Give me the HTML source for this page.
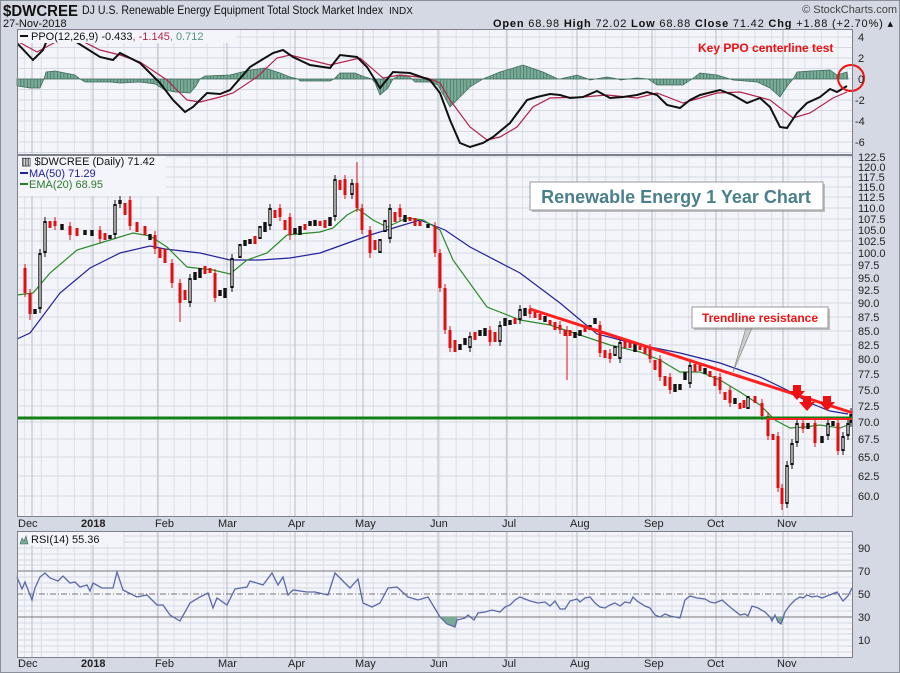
<!DOCTYPE html>
<html><head><meta charset="utf-8"><style>
body{margin:0;background:#d5d9e3;font-family:"Liberation Sans",sans-serif;}
svg text{font-family:"Liberation Sans",sans-serif;}
</style></head><body>
<svg width="900" height="673" xmlns="http://www.w3.org/2000/svg" style="display:block">
<defs>
<pattern id="vg" x="0" y="0" width="16.6" height="10" patternUnits="userSpaceOnUse"><rect width="16.6" height="10" fill="#f4f5fa"/><line x1="8" y1="0" x2="8" y2="10" stroke="#dcdfe8"/></pattern>
<pattern id="hb" x="17" y="0" width="3.33" height="10" patternUnits="userSpaceOnUse"><rect width="3.33" height="10" fill="#79ab98"/><line x1="0.3" y1="0" x2="0.3" y2="10" stroke="#3d6a5a" stroke-width="0.7"/></pattern>
<clipPath id="cp"><rect x="17" y="29" width="836" height="126"/></clipPath>
</defs>
<rect x="0" y="0" width="900" height="673" fill="#d5d9e3"/>
<rect x="0.5" y="0.5" width="899" height="672" fill="none" stroke="#8a8f9a"/>
<text x="3" y="16" font-size="16" font-weight="bold" fill="#111" textLength="75" lengthAdjust="spacingAndGlyphs">$DWCREE</text>
<text x="82" y="14" font-size="12" fill="#111" textLength="301" lengthAdjust="spacingAndGlyphs">DJ U.S. Renewable Energy Equipment Total Stock Market Index</text>
<text x="389" y="14" font-size="10" fill="#111">INDX</text>
<text x="3" y="27" font-size="11" fill="#111">27-Nov-2018</text>
<text x="897" y="13" font-size="11" fill="#444" text-anchor="end">© StockCharts.com</text>
<text x="493" y="27" font-size="11" fill="#111" textLength="400" lengthAdjust="spacing"><tspan font-weight="bold">Open</tspan> 68.98  <tspan font-weight="bold">High</tspan> 72.02  <tspan font-weight="bold">Low</tspan> 68.88  <tspan font-weight="bold">Close</tspan> 71.42  <tspan font-weight="bold">Chg</tspan> +1.88 (+2.70%) ▴</text>

<rect x="17" y="29" width="836" height="126" fill="url(#vg)"/>
<rect x="17" y="155" width="836" height="362" fill="url(#vg)"/>
<rect x="17" y="531" width="836" height="127" fill="url(#vg)"/>

<g stroke="#d6d9e3">
<line x1="17" y1="37" x2="853" y2="37"/><line x1="17" y1="47.5" x2="853" y2="47.5"/><line x1="17" y1="58" x2="853" y2="58"/><line x1="17" y1="68.5" x2="853" y2="68.5"/><line x1="17" y1="79" x2="853" y2="79"/><line x1="17" y1="89.5" x2="853" y2="89.5"/><line x1="17" y1="100" x2="853" y2="100"/><line x1="17" y1="110.5" x2="853" y2="110.5"/><line x1="17" y1="121" x2="853" y2="121"/><line x1="17" y1="131.5" x2="853" y2="131.5"/><line x1="17" y1="142" x2="853" y2="142"/><line x1="17" y1="152.5" x2="853" y2="152.5"/>
</g>
<g stroke="#d6d9e3">
<line x1="17" y1="157" x2="853" y2="157"/><line x1="17" y1="167" x2="853" y2="167"/><line x1="17" y1="177" x2="853" y2="177"/><line x1="17" y1="187" x2="853" y2="187"/><line x1="17" y1="197" x2="853" y2="197"/><line x1="17" y1="208" x2="853" y2="208"/><line x1="17" y1="219" x2="853" y2="219"/><line x1="17" y1="230" x2="853" y2="230"/><line x1="17" y1="241" x2="853" y2="241"/><line x1="17" y1="253" x2="853" y2="253"/><line x1="17" y1="265" x2="853" y2="265"/><line x1="17" y1="278" x2="853" y2="278"/><line x1="17" y1="290" x2="853" y2="290"/><line x1="17" y1="303" x2="853" y2="303"/><line x1="17" y1="317" x2="853" y2="317"/><line x1="17" y1="331" x2="853" y2="331"/><line x1="17" y1="345" x2="853" y2="345"/><line x1="17" y1="359" x2="853" y2="359"/><line x1="17" y1="374" x2="853" y2="374"/><line x1="17" y1="390" x2="853" y2="390"/><line x1="17" y1="406" x2="853" y2="406"/><line x1="17" y1="422" x2="853" y2="422"/><line x1="17" y1="439" x2="853" y2="439"/><line x1="17" y1="457" x2="853" y2="457"/><line x1="17" y1="476" x2="853" y2="476"/><line x1="17" y1="496" x2="853" y2="496"/>
</g>
<g stroke="#d6d9e3">
<line x1="17" y1="536" x2="853" y2="536"/><line x1="17" y1="542" x2="853" y2="542"/><line x1="17" y1="548" x2="853" y2="548"/><line x1="17" y1="554" x2="853" y2="554"/><line x1="17" y1="560" x2="853" y2="560"/><line x1="17" y1="565" x2="853" y2="565"/><line x1="17" y1="577" x2="853" y2="577"/><line x1="17" y1="583" x2="853" y2="583"/><line x1="17" y1="588" x2="853" y2="588"/><line x1="17" y1="600" x2="853" y2="600"/><line x1="17" y1="606" x2="853" y2="606"/><line x1="17" y1="611" x2="853" y2="611"/><line x1="17" y1="623" x2="853" y2="623"/><line x1="17" y1="629" x2="853" y2="629"/><line x1="17" y1="634" x2="853" y2="634"/><line x1="17" y1="640" x2="853" y2="640"/><line x1="17" y1="646" x2="853" y2="646"/><line x1="17" y1="652" x2="853" y2="652"/>
</g>
<g stroke="#b6bac6">
<path d="M32 29V155M93 29V155M158 29V155M227 29V155M295 29V155M363 29V155M438 29V155M507 29V155M577 29V155M652 29V155M716 29V155M783 29V155"/>
<path d="M32 155V517M93 155V517M158 155V517M227 155V517M295 155V517M363 155V517M438 155V517M507 155V517M577 155V517M652 155V517M716 155V517M783 155V517"/>
<path d="M32 531V658M93 531V658M158 531V658M227 531V658M295 531V658M363 531V658M438 531V658M507 531V658M577 531V658M652 531V658M716 531V658M783 531V658"/>
</g>

<polygon fill="url(#hb)" stroke="#3d6a5a" stroke-width="0.7" points="17,79 17,86 30,88 40,88 44,79 46,72 55,71 65,73 75,75 80,79 85,82 110,82 120,83 140,82 155,84 165,90 175,92 190,93 196,86 200,79 205,76 230,75 250,70 265,68 280,73 290,77 298,79 300,81 330,81 334,79 340,73 355,73 362,76 372,79 375,83 380,95 388,88 393,79 398,76 408,76 412,79 415,82 430,82 438,85 450,107 460,97 470,87 483,79 500,72 523,65 543,72 558,79 560,79 577,75 588,79 590,80 607,77 618,79 620,80 637,78 648,79 657,85 683,85 692,79 700,73 717,75 730,79 733,80 757,82 770,88 780,97 788,85 793,79 797,72 810,71 830,70 837,75 847,72 848,79"/>
<g clip-path="url(#cp)">
<polyline fill="none" stroke="#b3224a" stroke-width="1.2" points="17,41 37,52 50,45 63,38 80,40 100,50 120,55 140,62 167,80 187,100 200,102 220,97 233,93 257,77 277,58 290,55 330,65 360,58 383,78 400,75 427,78 440,83 450,100 470,127 487,140 500,137 517,127 533,107 550,98 583,97 607,95 637,98 657,93 683,103 717,93 740,92 770,100 793,118 810,113 833,98 847,92"/>
<polyline fill="none" stroke="#111" stroke-width="2" points="17,43 33,60 43,50 50,33 60,25 73,40 100,57 113,60 120,53 140,63 160,83 173,100 185,112 193,107 207,93 220,94 230,90 250,67 273,53 283,50 293,57 310,65 330,68 340,55 357,57 367,67 380,88 393,72 410,73 430,80 440,93 450,120 460,143 470,147 483,143 493,137 510,123 527,100 537,97 550,94 560,95 570,98 583,97 597,91 610,98 623,97 637,95 647,92 657,95 667,105 680,108 690,100 700,95 720,90 733,95 747,103 760,98 770,107 780,127 787,128 797,113 807,103 820,97 830,89 837,92 847,86"/>
</g>
<rect x="18" y="30" width="218" height="13" fill="#f4f5fa"/>
<line x1="20" y1="36" x2="28" y2="36" stroke="#111" stroke-width="2"/>
<text x="31" y="40" font-size="11" fill="#111">PPO(12,26,9) -0.433<tspan fill="#b3224a">, -1.145</tspan><tspan fill="#4f9480">, 0.712</tspan></text>
<text x="698" y="52" font-size="12" font-weight="bold" fill="#ee1111">Key PPO centerline test</text>
<ellipse cx="851" cy="78" rx="13" ry="13" fill="none" stroke="#ee1111" stroke-width="2"/>
<g font-size="11" fill="#222">
<text x="858" y="41">4</text><text x="858" y="62">2</text><text x="858" y="83">0</text><text x="855" y="104">-2</text><text x="855" y="125">-4</text><text x="855" y="146">-6</text>
</g>

<g font-size="11" fill="#222">
<text x="858" y="161">122.5</text><text x="858" y="171">120.0</text><text x="858" y="181">117.5</text><text x="858" y="191">115.0</text><text x="858" y="201">112.5</text><text x="858" y="212">110.0</text><text x="858" y="223">107.5</text><text x="858" y="234">105.0</text><text x="858" y="245">102.5</text><text x="858" y="257">100.0</text><text x="858" y="269">97.5</text><text x="858" y="282">95.0</text><text x="858" y="294">92.5</text><text x="858" y="307">90.0</text><text x="858" y="321">87.5</text><text x="858" y="335">85.0</text><text x="858" y="349">82.5</text><text x="858" y="363">80.0</text><text x="858" y="378">77.5</text><text x="858" y="394">75.0</text><text x="858" y="410">72.5</text><text x="858" y="426">70.0</text><text x="858" y="443">67.5</text><text x="858" y="461">65.0</text><text x="858" y="480">62.5</text><text x="858" y="500">60.0</text>
</g>

<polyline fill="none" stroke="#22229a" stroke-width="1.2" points="17,339 30,333 60,293 90,268 120,253 150,246 165,249 200,253 230,260 260,260 290,258 320,253 345,244 370,235 400,226 420,220 445,230 470,247 520,273 560,303 597,334 640,345 680,353 720,363 760,377 787,390 810,403 830,411 848,414"/>
<polyline fill="none" stroke="#2a8a2a" stroke-width="1.2" points="17,295 33,293 50,273 77,250 110,240 133,233 150,236 167,247 187,267 213,270 230,274 247,260 267,253 287,235 320,232 333,228 347,215 358,209 373,220 387,227 407,218 423,220 440,230 453,260 487,307 520,320 550,325 580,335 610,345 640,352 660,360 680,372 700,372 720,380 740,392 760,405 775,420 790,428 805,427 820,425 840,428 850,424"/>

<path fill="none" stroke="#e01010" stroke-width="1" d="M25 264V297M30 289V320M55 217V230M70 222V240M100 226V243M130 195V230M155 231V254M172 259V288M180 279V322M215 269V302M280 204V221M290 213V240M345 175V199M357 162V212M362 204V234M370 226V258M400 204V221M435 222V257M440 249V292M445 284V334M450 326V352M490 326V346M530 305V318M560 321V334M567 326V380M600 321V357M610 349V363M650 344V363M660 355V381M670 373V394M720 373V394M730 386V407M762 399V420M768 412V440M778 432V492M782 484V510M803 419V433M815 419V447M838 419V455"/>
<path fill="none" stroke="#111" stroke-width="1" d="M40 249V313M45 217V257M115 200V239M120 196V208M190 274V307M232 254V292M270 204V230M335 175V221M352 179V199M390 204V243M470 332V352M500 321V346M520 305V324M620 338V363M690 361V388M787 461V508M792 439V469M797 419V447M828 419V440M843 432V455M848 419V440M851 408V427"/>
<path fill="none" stroke="#e01010" stroke-width="3" d="M25 268V293M30 293V314M50 221V228M55 221V226M70 226V235M77 228V236M100 230V239M105 233V240M125 203V215M130 200V226M137 222V232M145 226V235M155 235V249M160 248V258M165 249V263M172 263V283M180 283V303M185 290V300M205 266V274M210 268V273M215 273V298M255 236V244M275 210V218M280 208V217M285 220V230M290 217V235M305 224V230M320 221V226M325 220V228M340 180V190M345 179V195M357 183V208M362 208V230M370 230V253M375 240V250M395 212V222M400 208V217M410 217V221M415 218V226M420 221V226M435 226V253M440 253V288M445 288V330M450 330V348M455 340V352M475 332V340M490 330V342M495 332V342M515 318V324M530 309V314M535 312V318M540 314V320M550 320V325M555 322V330M560 325V330M565 330V336M570 330V336M585 326V332M600 325V353M605 350V358M610 353V359M625 340V348M630 342V348M640 346V350M645 346V354M650 348V359M655 360V370M660 359V377M665 376V386M670 377V390M695 364V372M700 365V371M710 371V377M715 376V386M720 377V390M725 392V400M730 390V403M740 403V409M744 400V408M755 396V403M762 403V416M768 416V436M773 434V440M778 436V488M782 488V504M803 423V429M815 423V443M838 423V451"/>
<path fill="none" stroke="#111" stroke-width="3.4" d="M35 309V314M40 253V309M45 221V253M62 224V230M85 230V235M92 230V236M110 235V239M115 204V235M120 200V204M150 234V240M190 278V303M195 272V280M200 268V278M220 290V296M225 288V298M232 258V288M240 244V258M245 240V246M250 239V244M260 226V239M265 222V232M270 208V226M295 228V234M300 226V235M310 221V226M315 220V226M330 217V226M335 179V217M352 183V195M380 239V253M385 220V232M390 208V239M405 215V222M428 224V228M460 344V350M465 338V345M470 336V348M480 330V336M485 328V336M500 325V342M505 318V326M510 320V325M520 309V320M525 308V316M545 316V322M575 332V338M580 330V336M590 325V330M595 318V324M615 346V356M620 342V359M635 344V352M675 384V392M680 384V390M685 372V380M690 365V384M705 368V374M735 398V404M748 396V409M787 465V504M792 443V465M797 423V443M808 423V429M822 436V443M828 423V436M833 421V426M843 436V451M848 423V436M851 414V423"/>
<path fill="none" stroke="#fff" stroke-width="1.2" d="M40 255V307M45 223V251M115 206V233M190 280V301M232 260V286M240 246V256M260 228V237M270 210V224M335 181V215M352 185V193M380 241V251M385 222V230M390 210V237M470 338V346M500 327V340M520 311V318M615 348V354M620 344V357M690 367V382M748 398V407M787 467V502M792 445V463M797 425V441M828 425V434M843 438V449M848 425V434"/>

<line x1="17" y1="418" x2="853" y2="418" stroke="#128012" stroke-width="3"/>
<line x1="767" y1="419" x2="853" y2="419" stroke="#ff2020" stroke-width="2"/>
<line x1="530" y1="309" x2="853" y2="413" stroke="#ff2020" stroke-width="3"/>
<path d="M793 385h8v6h4l-8 9l-8 -9h4z M803 396h8v6h4l-8 9l-8 -9h4z M823 396h8v6h4l-8 9l-8 -9h4z" fill="#ee1111"/>

<rect x="18" y="156" width="148" height="40" fill="#f4f5fa"/>
<text x="21" y="165" font-size="11" fill="#111">▥ $DWCREE (Daily) 71.42</text>
<line x1="20" y1="173" x2="28" y2="173" stroke="#22229a" stroke-width="2"/><text x="29" y="177" font-size="11" fill="#22229a">MA(50) 71.29</text>
<line x1="20" y1="184" x2="28" y2="184" stroke="#2a7a2a" stroke-width="2"/><text x="29" y="188" font-size="11" fill="#2a7a2a">EMA(20) 68.95</text>

<rect x="532" y="184" width="293" height="28" fill="#888" opacity="0.5"/><rect x="530" y="182" width="293" height="28" fill="#fff" stroke="#999"/>
<text x="676" y="203" font-size="18" font-weight="bold" fill="#4a7f8c" text-anchor="middle">Renewable Energy 1 Year Chart</text>
<path d="M746 328 L733 372 L752 328z" fill="#ccc" stroke="#888" stroke-width="0.7"/>
<rect x="694" y="309" width="136" height="21" fill="#888" opacity="0.5"/><rect x="692" y="307" width="136" height="21" fill="#fff" stroke="#999"/>
<text x="760" y="322" font-size="12" font-weight="bold" fill="#ee1111" text-anchor="middle">Trendline resistance</text>

<line x1="17" y1="571" x2="853" y2="571" stroke="#777"/>
<line x1="17" y1="617" x2="853" y2="617" stroke="#777"/>
<line x1="17" y1="594" x2="853" y2="594" stroke="#777" stroke-dasharray="6,2,1,2"/>
<path d="M436 617 L440 617 L447 624 L455 627 L457 620 L458 617z M770 617 L772 621 L775 615 L778 622 L781 624 L785 617z" fill="#79ab98"/>
<polyline fill="none" stroke="#5a68a8" stroke-width="1.3" points="17,577 22,589 25,582 32,600 35,588 40,577 45,573 50,578 58,581 63,576 70,583 75,582 80,587 87,585 90,591 93,583 102,588 113,588 117,572 123,590 137,597 147,595 157,605 163,605 170,615 180,621 190,603 200,597 208,593 213,608 217,598 227,605 235,589 247,587 250,581 263,585 272,573 278,585 283,577 288,595 293,590 307,592 315,592 328,595 335,573 350,588 358,579 363,603 372,607 380,603 388,588 397,587 408,597 418,600 428,597 440,617 447,624 455,627 457,620 465,618 468,615 474,620 478,613 485,612 492,610 500,612 505,607 510,605 515,600 520,597 525,599 530,601 538,603 545,602 550,606 555,601 560,609 565,609 570,601 577,599 580,602 585,598 590,597 595,603 600,607 605,608 610,605 615,603 620,606 625,602 630,603 633,597 637,601 645,606 650,608 655,615 660,617 665,614 670,616 680,618 685,600 690,596 697,598 705,599 710,602 715,603 722,600 730,607 735,611 740,615 745,614 748,616 752,606 758,608 765,612 770,617 772,621 775,615 778,622 781,624 785,612 790,605 795,600 800,597 803,598 807,595 812,597 817,596 822,598 827,596 832,594 837,592 843,601 848,596 852,588"/>
<rect x="18" y="532" width="105" height="13" fill="#f4f5fa"/>
<path d="M20 544 L22 538 L24 541 L26 536 L28 544z" fill="#79ab98" stroke="#3d6a5a" stroke-width="0.6"/>
<text x="31" y="543" font-size="11" fill="#111">RSI(14) 55.36</text>
<g font-size="11" fill="#222">
<text x="858" y="552">90</text><text x="858" y="575">70</text><text x="858" y="598">50</text><text x="858" y="621">30</text><text x="858" y="644">10</text>
</g>

<g fill="none" stroke="#7d818c">
<rect x="17.5" y="29.5" width="835" height="125"/>
<rect x="17.5" y="155.5" width="835" height="361"/>
<rect x="17.5" y="531.5" width="835" height="126"/>
</g>

<g font-size="11" fill="#222">
<text x="18" y="527">Dec</text><text x="81" y="527" font-weight="bold">2018</text><text x="155" y="527">Feb</text><text x="218" y="527">Mar</text><text x="288" y="527">Apr</text><text x="355" y="527">May</text><text x="430" y="527">Jun</text><text x="502" y="527">Jul</text><text x="570" y="527">Aug</text><text x="644" y="527">Sep</text><text x="707" y="527">Oct</text><text x="777" y="527">Nov</text>
<text x="18" y="667">Dec</text><text x="81" y="667" font-weight="bold">2018</text><text x="155" y="667">Feb</text><text x="218" y="667">Mar</text><text x="288" y="667">Apr</text><text x="355" y="667">May</text><text x="430" y="667">Jun</text><text x="502" y="667">Jul</text><text x="570" y="667">Aug</text><text x="644" y="667">Sep</text><text x="707" y="667">Oct</text><text x="777" y="667">Nov</text>
</g>
</svg>
</body></html>
